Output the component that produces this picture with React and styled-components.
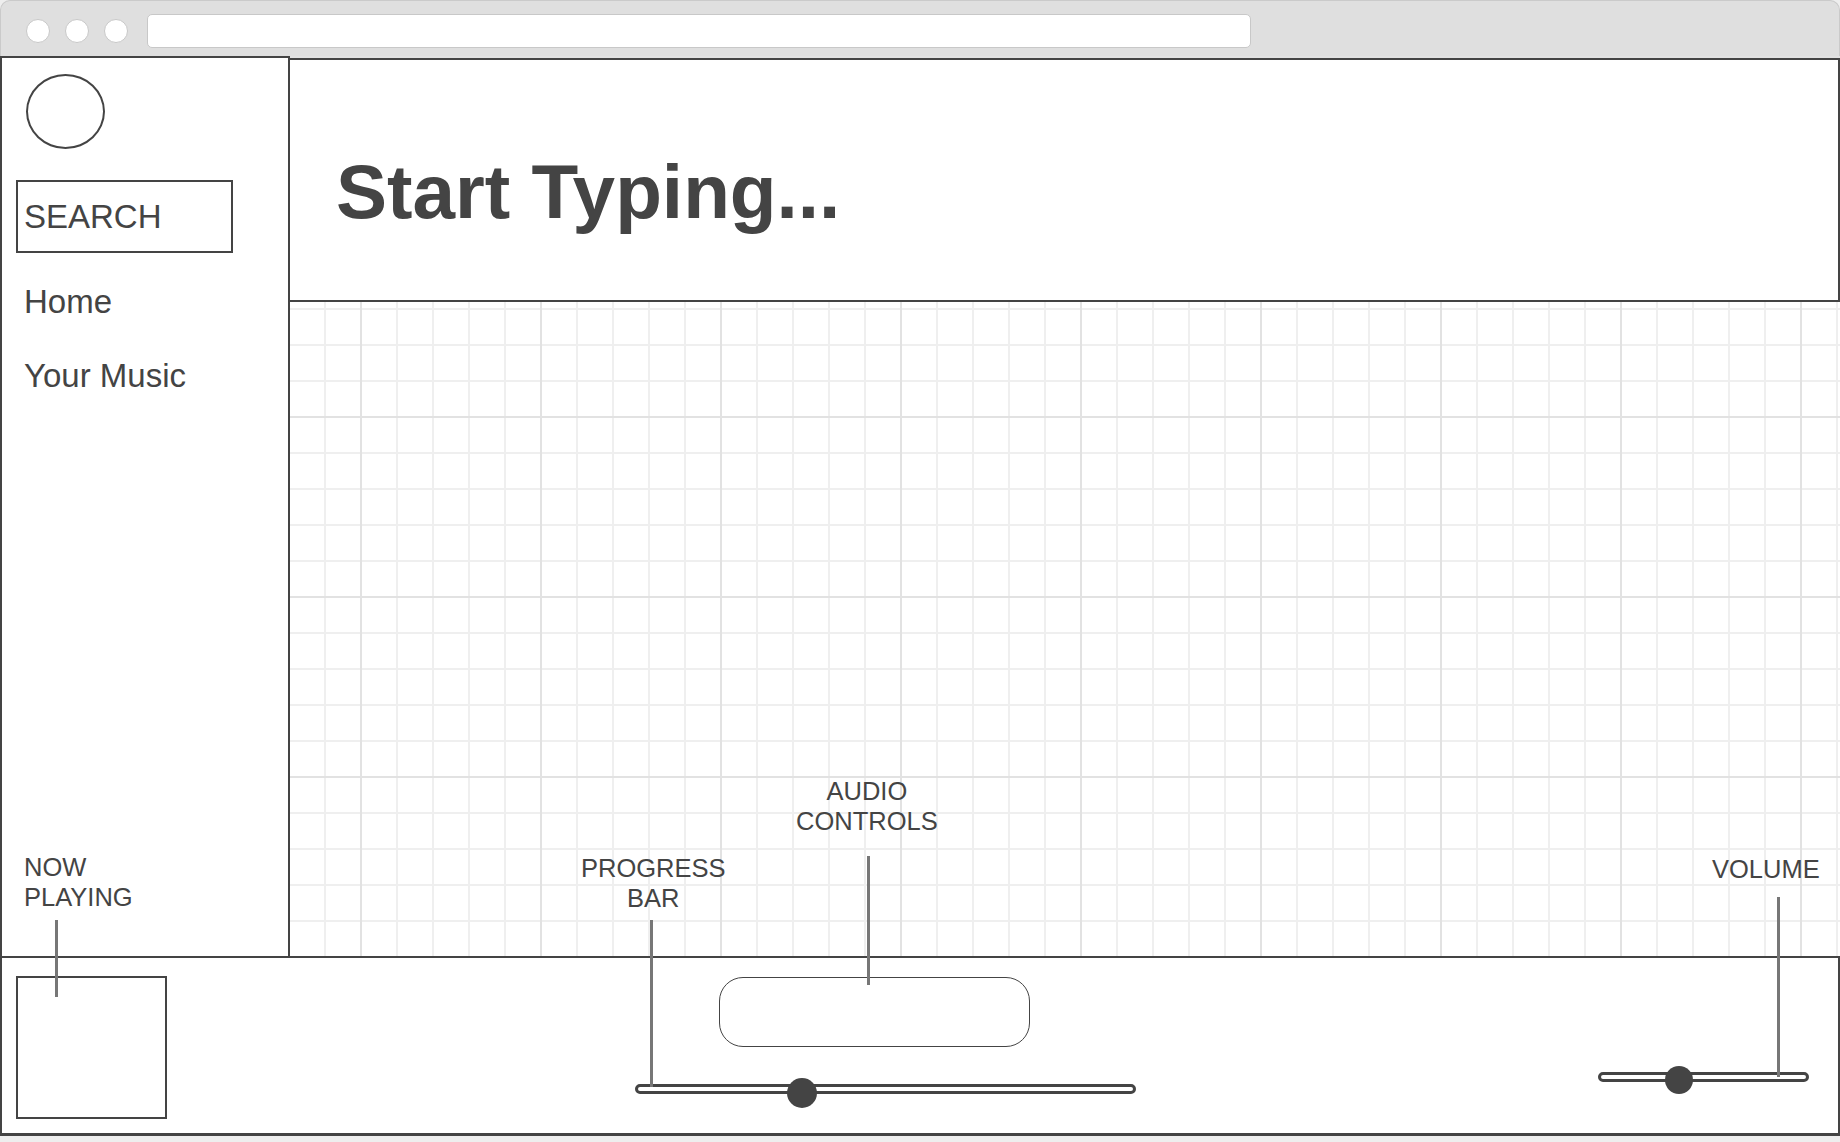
import React from "react";
import styled, { createGlobalStyle } from "styled-components";

const INK = "#444444";
const FONT = `"Liberation Sans", Arial, Helvetica, sans-serif`;

const GlobalStyle = createGlobalStyle`
    * { box-sizing: border-box; }
    html, body { margin: 0; padding: 0; background: #eeeeee; }
    body { font-family: ${FONT}; color: ${INK}; }
`;

// callouts that annotate the wireframe (page coordinates)
const callouts = [
    { id: "now", lines: ["NOW", "PLAYING"], x: 24, y: 852, align: "left", lineX: 31, gap: 8, lineH: 77 },
    { id: "progress", lines: ["PROGRESS", "BAR"], x: 581, y: 853, align: "center", lineX: 69, gap: 7, lineH: 167 },
    { id: "audio", lines: ["AUDIO", "CONTROLS"], x: 796, y: 776, align: "center", lineX: 71, gap: 20, lineH: 129 },
    { id: "volume", lines: ["VOLUME"], x: 1712, y: 854, align: "left", lineX: 65, gap: 13, lineH: 180 },
];

const App = () => {
    const progress = 0.331;
    const volume = 0.379;

    return (
        <Window>
            <GlobalStyle />
            <Chrome>
                <Dot />
                <Dot />
                <Dot />
                <UrlBar />
            </Chrome>

            <Canvas>
                <Main>
                    <Sidebar>
                        <Logo />
                        <SearchBox>SEARCH</SearchBox>
                        <Nav>
                            <NavItem>Home</NavItem>
                            <NavItem>Your Music</NavItem>
                        </Nav>
                    </Sidebar>

                    <Content>
                        <Header>
                            <Title>Start Typing...</Title>
                        </Header>
                    </Content>
                </Main>

                <Player>
                    <AlbumArt />
                    <Center>
                        <Controls />
                        <Track $width={501}>
                            <Thumb $size={30} $drop={4} style={{ left: `${progress * 100}%` }} />
                        </Track>
                    </Center>
                    <VolumeWrap>
                        <Track $width={211}>
                            <Thumb $size={28} $drop={3} style={{ left: `${volume * 100}%` }} />
                        </Track>
                    </VolumeWrap>
                </Player>
                <BottomEdge />
            </Canvas>

            {callouts.map((c) => (
                <Callout key={c.id} $x={c.x} $y={c.y}>
                    <Label $align={c.align}>
                        {c.lines.map((l) => (
                            <span key={l}>{l}</span>
                        ))}
                    </Label>
                    <Leader $x={c.lineX} $gap={c.gap} $h={c.lineH} />
                </Callout>
            ))}
        </Window>
    );
};

const Window = styled.div`
    position: relative;
    width: 1840px;
    height: 1142px;
    overflow: hidden;
    display: flex;
    flex-direction: column;
    font-family: ${FONT};
`;

const Chrome = styled.div`
    height: 56px;
    flex-shrink: 0;
    display: flex;
    align-items: center;
    gap: 15px;
    padding: 4px 0 0 25px;
    background: #dfdfdf;
    border: 1.5px solid #cacaca;
    border-bottom: none;
    border-radius: 10px 10px 0 0;
`;

const Dot = styled.div`
    width: 24px;
    height: 24px;
    border-radius: 50%;
    background: #fff;
    border: 1.5px solid #c8c8c8;
`;

const UrlBar = styled.div`
    margin-left: 4px;
    width: 1104px;
    height: 34px;
    background: #fff;
    border: 1.5px solid #c8c8c8;
    border-radius: 5px;
`;

const Canvas = styled.div`
    flex: 1;
    display: flex;
    flex-direction: column;
    background-color: #fff;
    background-image:
        linear-gradient(to right, #e2e2e2 2px, transparent 2px),
        linear-gradient(to bottom, #e2e2e2 2px, transparent 2px),
        linear-gradient(to right, #efefef 2px, transparent 2px),
        linear-gradient(to bottom, #efefef 2px, transparent 2px);
    background-size: 180px 180px, 180px 180px, 36px 36px, 36px 36px;
    background-position: 0 0;
`;

const Main = styled.div`
    height: 900px;
    display: flex;
`;

const Sidebar = styled.aside`
    width: 290px;
    flex-shrink: 0;
    display: flex;
    flex-direction: column;
    align-items: flex-start;
    background: #fff;
    border: 2px solid ${INK};
    border-bottom: none;
`;

const Logo = styled.div`
    width: 79px;
    height: 75px;
    margin: 16px 0 0 24px;
    border: 2px solid ${INK};
    border-radius: 50%;
`;

const SearchBox = styled.div`
    width: 217px;
    height: 73px;
    margin: 31px 0 0 14px;
    padding-left: 6px;
    display: flex;
    align-items: center;
    border: 2px solid ${INK};
    font-size: 33px;
    color: ${INK};
`;

const Nav = styled.nav`
    display: flex;
    flex-direction: column;
    gap: 34px;
    margin-top: 29px;
    padding-left: 22px;
`;

const NavItem = styled.div`
    font-size: 33px;
    line-height: 40px;
    color: ${INK};
`;

const Content = styled.div`
    flex: 1;
    display: flex;
    flex-direction: column;
`;

const Header = styled.header`
    height: 244px;
    margin-top: 2px;
    padding-left: 46px;
    background: #fff;
    border: 2px solid ${INK};
    border-left: none;
`;

const Title = styled.h1`
    margin: 94px 0 0;
    font-size: 76.5px;
    line-height: 1;
    font-weight: 700;
    color: ${INK};
`;

const Player = styled.footer`
    height: 180px;
    flex-shrink: 0;
    display: flex;
    align-items: flex-start;
    background: #fff;
    border: 2px solid ${INK};
    border-bottom-width: 3px;
`;

const AlbumArt = styled.div`
    width: 151px;
    height: 143px;
    margin: 18px 0 0 14px;
    border: 2px solid ${INK};
`;

const Center = styled.div`
    display: flex;
    flex-direction: column;
    gap: 37px;
    margin: 19px 0 0 468px;
`;

const Controls = styled.div`
    width: 311px;
    height: 70px;
    margin-left: 84px;
    border: 1.5px solid ${INK};
    border-radius: 24px;
`;

const Track = styled.div`
    position: relative;
    width: ${(p) => p.$width}px;
    height: 10px;
    background: #fff;
    border: 3px solid ${INK};
    border-radius: 5px;
`;

const Thumb = styled.div`
    position: absolute;
    top: calc(50% + ${(p) => p.$drop - p.$size / 2}px);
    width: ${(p) => p.$size}px;
    height: ${(p) => p.$size}px;
    margin-left: ${(p) => -p.$size / 2}px;
    border-radius: 50%;
    background: ${INK};
`;

const VolumeWrap = styled.div`
    margin: 114px 29px 0 auto;
`;

const BottomEdge = styled.div`
    height: 6px;
    background: #eeeeee;
`;

const Callout = styled.div`
    position: absolute;
    left: ${(p) => p.$x}px;
    top: ${(p) => p.$y}px;
    display: flex;
    flex-direction: column;
    align-items: flex-start;
    pointer-events: none;
`;

const Label = styled.div`
    display: flex;
    flex-direction: column;
    align-items: ${(p) => (p.$align === "center" ? "center" : "flex-start")};
    font-size: 25.5px;
    line-height: 30px;
    color: ${INK};
`;

const Leader = styled.div`
    width: 3px;
    height: ${(p) => p.$h}px;
    margin: ${(p) => p.$gap}px 0 0 ${(p) => p.$x}px;
    background: #777777;
`;

export default App;
